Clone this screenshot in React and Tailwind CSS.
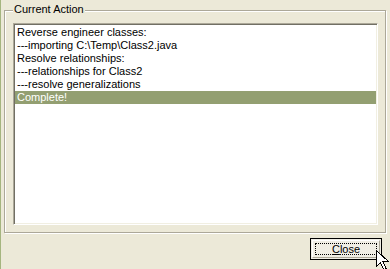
import React from 'react';

const lines = [
  'Reverse engineer classes:',
  '---importing C:\\Temp\\Class2.java',
  'Resolve relationships:',
  '---relationships for Class2',
  '---resolve generalizations',
  'Complete!',
];

const font = { fontFamily: '"Liberation Sans", Arial, sans-serif' };

const Cursor = () => (
  <svg
    className="absolute left-[375px] top-[250px]"
    width="13"
    height="20"
    viewBox="0 0 13 20"
  >
    <path
      d="M0.5 0.5 L0.5 16.5 L4.5 12.5 L7.5 19.5 L10 18.5 L7 11.5 L12.5 11.5 Z"
      fill="#fff"
      stroke="#000"
      strokeWidth="1"
      shapeRendering="crispEdges"
    />
  </svg>
);

export default function App() {
  return (
    <div
      className="relative w-[390px] h-[269px] bg-[#ECE9D8] border-l border-[#A5B57F] text-[11px] text-black overflow-hidden"
      style={font}
    >
      {/* Group box */}
      <div className="relative ml-[3px] mt-[10px] w-[382px] h-[223px] border border-[#ACA899] shadow-[inset_1px_1px_0_#fff,1px_1px_0_#fff] pl-[8px] pt-[12px]">
        <span className="absolute left-[8px] top-[-8px] bg-[#ECE9D8] px-[1px] leading-[13px]">
          Current Action
        </span>

        {/* List */}
        <div className="w-[365px] h-[202px] bg-white border border-t-[#ACA899] border-l-[#ACA899] border-b-white border-r-white shadow-[inset_1px_1px_0_#716F64,inset_-1px_-1px_0_#F1EFE2] p-[1px] pt-[2px]">
          {lines.map((l, i) => (
            <div
              key={i}
              className={
                'h-[13px] leading-[13px] pl-[2px] whitespace-pre ' +
                (i === lines.length - 1 ? 'bg-[#939F71] text-white' : '')
              }
            >
              {l}
            </div>
          ))}
        </div>
      </div>

      {/* Buttons */}
      <div className="flex justify-end pr-[8px] mt-[5px]">
        <button className="w-[72px] h-[22px] border border-black bg-[#F0EEE5] p-[1px]">
          <div className="w-full h-full border border-t-white border-l-white border-b-[#ACA899] border-r-[#ACA899] p-[2px]">
            <div className="w-full h-full border border-dotted border-black flex items-center justify-center leading-none">
              <span>
                <span className="underline">C</span>lose
              </span>
            </div>
          </div>
        </button>
      </div>

      <Cursor />
    </div>
  );
}
